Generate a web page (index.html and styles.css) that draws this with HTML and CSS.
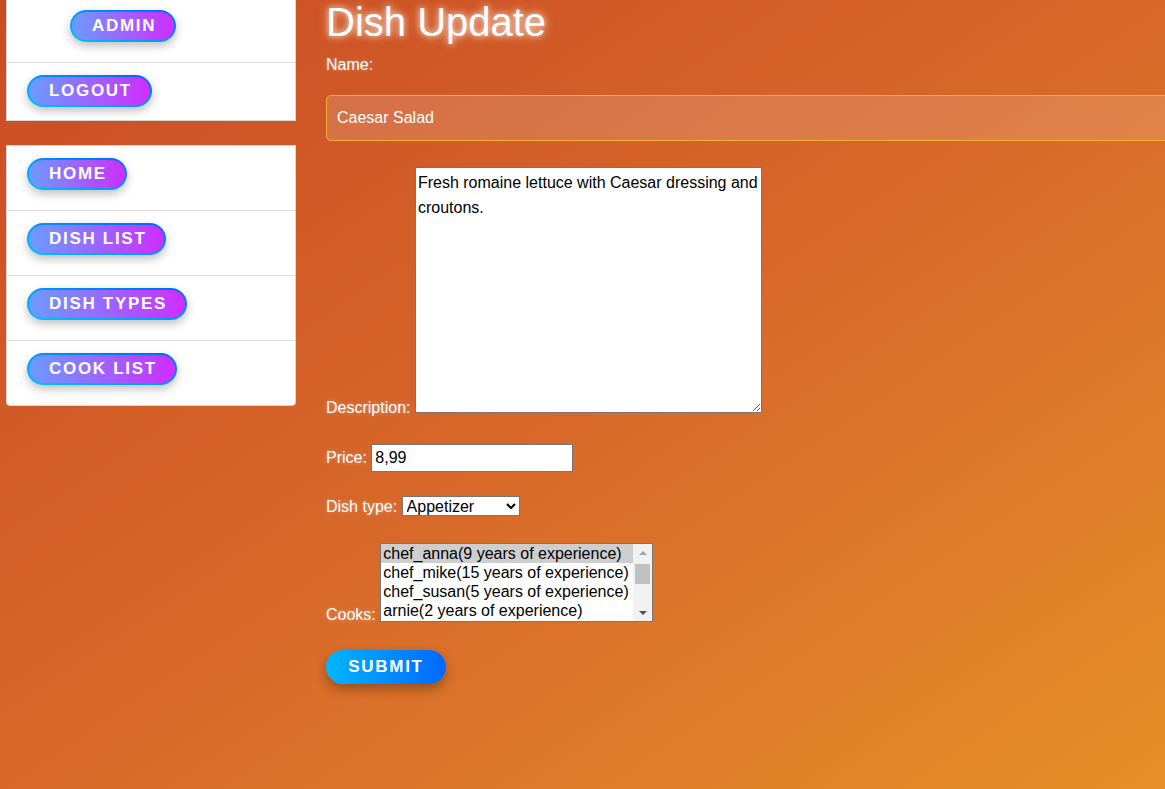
FILE: index.html
```html
<!DOCTYPE html>
<html lang="en">
<head>
<meta charset="utf-8">
<title>Dish Update</title>
<link rel="stylesheet" href="styles.css">
</head>
<body>
<div class="layout">
  <aside class="sidebar">
    <nav class="box box-top">
      <div class="row"><a class="nav-btn admin" href="#">Admin</a></div>
      <div class="row last"><a class="nav-btn" href="#">Logout</a></div>
    </nav>
    <nav class="box">
      <div class="row"><a class="nav-btn" href="#">Home</a></div>
      <div class="row"><a class="nav-btn" href="#">Dish list</a></div>
      <div class="row"><a class="nav-btn" href="#">Dish types</a></div>
      <div class="row"><a class="nav-btn" href="#">Cook list</a></div>
    </nav>
  </aside>
  <main class="content">
    <h1 class="title">Dish Update</h1>
    <form class="form">
      <label class="lbl lbl-block" for="name">Name:</label>
      <input class="name-input" id="name" type="text" value="Caesar Salad">
      <div class="field field-desc">
        <label class="lbl" for="desc">Description:</label>
        <textarea class="desc" id="desc">Fresh romaine lettuce with Caesar dressing and croutons.</textarea>
      </div>
      <div class="field field-price">
        <label class="lbl" for="price">Price:</label>
        <input class="price" id="price" type="text" value="8,99">
      </div>
      <div class="field field-type">
        <label class="lbl" for="type">Dish type:</label>
        <select class="type" id="type">
          <option selected>Appetizer</option>
          <option>Main course</option>
          <option>Dessert</option>
        </select>
      </div>
      <div class="field field-cooks">
        <span class="lbl">Cooks:</span>
        <div class="listbox" role="listbox" aria-multiselectable="true">
          <div class="listbox-inner">
            <div class="options">
              <div class="opt selected" role="option">chef_anna(9 years of experience)</div>
              <div class="opt" role="option">chef_mike(15 years of experience)</div>
              <div class="opt" role="option">chef_susan(5 years of experience)</div>
              <div class="opt" role="option">arnie(2 years of experience)</div>
            </div>
            <div class="scrollbar" aria-hidden="true">
              <span class="arrow up"></span>
              <span class="track"><span class="thumb"></span></span>
              <span class="arrow down"></span>
            </div>
          </div>
        </div>
      </div>
      <button class="submit" type="button">Submit</button>
    </form>
  </main>
</div>
</body>
</html>
```

FILE: styles.css
```css
html {
  overflow: hidden;
  height: 100%;
}
body {
  margin: 0;
  min-height: 100%;
  font-family: "Liberation Sans", Arial, sans-serif;
  font-size: 16px;
  background: linear-gradient(to bottom right, #c94c24 0%, #d8682a 50%, #e68f28 100%);
  background-attachment: fixed;
  color: #fff;
}
.layout {
  display: flex;
  gap: 30px;
  align-items: flex-start;
}
.sidebar {
  flex: 0 0 290px;
  margin-left: 6px;
  display: flex;
  flex-direction: column;
  gap: 24px;
  margin-top: -3px;
}
.box {
  background: #fff;
  border: 1px solid #d6d6d6;
  border-radius: 0 0 4px 4px;
}
.box-top {
  border-radius: 0;
}
.row {
  padding: 12px 20px 20px;
  border-bottom: 1px solid #dedede;
  height: 32px;
}
.row:last-child {
  border-bottom: none;
}
.row.last {
  padding-bottom: 13px;
}
.nav-btn {
  display: inline-flex;
  align-items: center;
  height: 32px;
  box-sizing: border-box;
  padding: 0 18px 0 20px;
  border: 2px solid transparent;
  border-radius: 16px;
  background:
    linear-gradient(to right, #6a9cff, #cf2eff) padding-box,
    linear-gradient(to top right, #00c3ff, #0066ff) border-box;
  box-shadow: 0 4px 10px rgba(0, 0, 0, 0.25);
  color: #fff;
  text-decoration: none;
  font-weight: bold;
  font-size: 17px;
  letter-spacing: 1.7px;
  text-transform: uppercase;
}
.nav-btn.admin {
  margin-left: 43px;
}
.content {
  flex: 1;
  min-width: 0;
}
.title {
  margin: -1px 0 0;
  font-size: 40px;
  font-weight: normal;
  line-height: 46px;
  color: #fff;
  text-shadow: 0 0 6px rgba(255, 255, 255, 0.8), 0 0 12px rgba(255, 230, 200, 0.5);
}
.form {
  display: block;
}
.lbl {
  color: #fff;
  text-shadow: 0 0 4px rgba(255, 255, 255, 0.35);
}
.lbl-block {
  display: block;
  margin-top: 11px;
}
.name-input {
  display: block;
  box-sizing: border-box;
  width: 880px;
  height: 46px;
  margin: 21px 0 0;
  padding: 0 10px;
  border: 1px solid #f6b22e;
  border-radius: 5px;
  background: rgba(255, 255, 255, 0.15);
  color: #fff;
  font-family: "Liberation Sans", Arial, sans-serif;
  font-size: 16px;
  outline: none;
}
.field {
  display: block;
}
.field-desc {
  margin-top: 26px;
}
.desc {
  box-sizing: border-box;
  width: 347px;
  height: 246px;
  margin: 0;
  padding: 2px;
  border: 1px solid #767676;
  background: #fff;
  color: #000;
  font-family: "Liberation Sans", Arial, sans-serif;
  font-size: 16px;
  line-height: 25px;
  resize: both;
}
.field-price {
  margin-top: 27px;
}
.price {
  box-sizing: border-box;
  width: 202px;
  height: 28px;
  margin: 0;
  padding: 4px 3px;
  border: 1px solid #767676;
  background: #fff;
  color: #000;
  font-family: "Liberation Sans", Arial, sans-serif;
  font-size: 16px;
}
.field-type {
  margin-top: 24px;
}
.type {
  width: 118px;
  height: 20px;
  margin: 0;
  border: 1px solid #767676;
  border-radius: 0;
  background: #fff;
  color: #000;
  font-family: "Liberation Sans", Arial, sans-serif;
  font-size: 16px;
}
.field-cooks {
  margin-top: 27px;
}
.listbox {
  display: inline-block;
  box-sizing: border-box;
  width: 273px;
  height: 79px;
  margin-bottom: -2px;
  overflow: hidden;
  vertical-align: baseline;
  border: 1px solid #767676;
  background: #fff;
  color: #000;
}
.listbox-inner {
  display: flex;
  height: 100%;
}
.options {
  flex: 1;
  min-width: 0;
}
.opt {
  height: 19px;
  line-height: 19px;
  padding: 0 2px;
  white-space: nowrap;
  font-size: 16px;
}
.opt.selected {
  background: #cecece;
}
.scrollbar {
  flex: 0 0 19px;
  display: flex;
  flex-direction: column;
  background: #f1f1f1;
}
.arrow {
  flex: 0 0 17px;
  display: flex;
  align-items: center;
  justify-content: center;
}
.arrow::before {
  content: "";
  width: 0;
  height: 0;
  border-left: 4px solid transparent;
  border-right: 4px solid transparent;
}
.arrow.up::before {
  border-bottom: 4px solid #a3a3a3;
}
.arrow.down::before {
  border-top: 4px solid #505050;
}
.track {
  flex: 1;
  display: flex;
  flex-direction: column;
  padding: 3px 2px 0;
}
.thumb {
  height: 20px;
  background: #c1c1c1;
}
.submit {
  display: block;
  margin-top: 26px;
  width: 120px;
  height: 34px;
  padding: 0;
  border: none;
  border-radius: 17px;
  background: linear-gradient(to right, #00b6ff, #0068ff);
  box-shadow: 0 5px 12px rgba(0, 0, 0, 0.3);
  color: #fff;
  font-family: "Liberation Sans", Arial, sans-serif;
  font-weight: bold;
  font-size: 17px;
  letter-spacing: 1.7px;
  text-transform: uppercase;
  cursor: pointer;
}
```
